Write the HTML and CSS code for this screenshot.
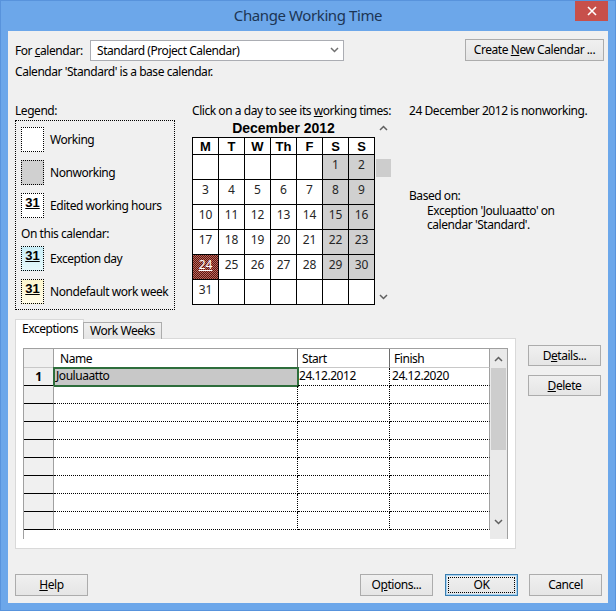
FILE: index.html
```html
<!DOCTYPE html>
<html>
<head>
<meta charset="utf-8">
<title>Change Working Time</title>
<link rel="stylesheet" href="styles.css">
</head>
<body>
<div class="window">
  <div class="titlebar">
    <div></div>
    <div class="title">Change Working Time</div>
    <div class="close"><svg width="10" height="10" viewBox="0 0 10 10"><path d="M1 1 L9 9 M9 1 L1 9" stroke="#fff" stroke-width="1.6" fill="none"/></svg></div>
  </div>
  <div class="client">
    <div class="top-row">
      <span class="lbl">For <u>c</u>alendar:</span>
      <div class="select"><span>Standard (Project Calendar)</span><svg class="chev" width="9" height="6" viewBox="0 0 9 6"><path d="M1 1 L4.5 4.5 L8 1" stroke="#707070" stroke-width="1.5" fill="none"/></svg></div>
      <div class="btn btn-create"><span>Create <u>N</u>ew Calendar ...</span></div>
    </div>
    <div class="base-note">Calendar 'Standard' is a base calendar.</div>

    <div class="middle">
      <div class="legend-col">
        <div class="cap">Legend:</div>
        <div class="legend-box">
          <div class="leg-item"><div class="sw"></div><span>Working</span></div>
          <div class="leg-item"><div class="sw sw-non"></div><span>Nonworking</span></div>
          <div class="leg-item"><div class="sw sw-num">31</div><span>Edited working hours</span></div>
          <div class="leg-sub">On this calendar:</div>
          <div class="leg-item"><div class="sw sw-num sw-exc">31</div><span>Exception day</span></div>
          <div class="leg-item"><div class="sw sw-num sw-nd">31</div><span>Nondefault work week</span></div>
        </div>
      </div>

      <div class="cal-col">
        <div class="cap">Click on a day to see its <u>w</u>orking times:</div>
        <div class="cal-wrap">
          <div class="cal">
            <div class="month">December 2012</div>
            <div class="grid">
              <div class="hd">M</div><div class="hd">T</div><div class="hd">W</div><div class="hd">Th</div><div class="hd">F</div><div class="hd">S</div><div class="hd">S</div>
              <div></div><div></div><div></div><div></div><div></div><div class="we">1</div><div class="we">2</div>
              <div>3</div><div>4</div><div>5</div><div>6</div><div>7</div><div class="we">8</div><div class="we">9</div>
              <div>10</div><div>11</div><div>12</div><div>13</div><div>14</div><div class="we">15</div><div class="we">16</div>
              <div>17</div><div>18</div><div>19</div><div>20</div><div>21</div><div class="we">22</div><div class="we">23</div>
              <div class="sel"><span>24</span></div><div>25</div><div>26</div><div>27</div><div>28</div><div class="we">29</div><div class="we">30</div>
              <div>31</div><div></div><div></div><div></div><div></div><div></div><div></div>
            </div>
          </div>
          <div class="cal-scroll">
            <div class="arr"><svg width="9" height="6" viewBox="0 0 9 6"><path d="M1 5 L4.5 1.5 L8 5" stroke="#606060" stroke-width="1.5" fill="none"/></svg></div>
            <div class="cthumb"></div>
            <div class="arr arr-down"><svg width="9" height="6" viewBox="0 0 9 6"><path d="M1 1 L4.5 4.5 L8 1" stroke="#606060" stroke-width="1.5" fill="none"/></svg></div>
          </div>
        </div>
      </div>

      <div class="info-col">
        <div class="cap">24 December 2012 is nonworking.</div>
        <div class="based">Based on:</div>
        <div class="based-text"><div>Exception 'Jouluaatto' on</div><div>calendar 'Standard'.</div></div>
      </div>
    </div>

    <div class="lower">
      <div class="tabs-col">
        <div class="tabs">
          <div class="tab tab-active">Exceptions</div>
          <div class="tab">Work Weeks</div>
        </div>
        <div class="panel">
          <div class="table">
            <div class="tgrid">
              <div class="row hrow">
                <div class="rh"></div>
                <div class="c c-name">Name</div>
                <div class="c c-start">Start</div>
                <div class="c c-fin">Finish</div>
              </div>
              <div class="row">
                <div class="rh rh-num">1</div>
                <div class="c c-name c-selname">Jouluaatto</div>
                <div class="c c-start">24.12.2012</div>
                <div class="c c-fin">24.12.2020</div>
              </div>
              <div class="row"><div class="rh"></div><div class="c c-name"></div><div class="c c-start"></div><div class="c c-fin"></div></div>
              <div class="row"><div class="rh"></div><div class="c c-name"></div><div class="c c-start"></div><div class="c c-fin"></div></div>
              <div class="row"><div class="rh"></div><div class="c c-name"></div><div class="c c-start"></div><div class="c c-fin"></div></div>
              <div class="row"><div class="rh"></div><div class="c c-name"></div><div class="c c-start"></div><div class="c c-fin"></div></div>
              <div class="row"><div class="rh"></div><div class="c c-name"></div><div class="c c-start"></div><div class="c c-fin"></div></div>
              <div class="row"><div class="rh"></div><div class="c c-name"></div><div class="c c-start"></div><div class="c c-fin"></div></div>
              <div class="row"><div class="rh"></div><div class="c c-name"></div><div class="c c-start"></div><div class="c c-fin"></div></div>
              <div class="row"><div class="rh"></div><div class="c c-name"></div><div class="c c-start"></div><div class="c c-fin"></div></div>
            </div>
            <div class="tscroll">
              <div class="tarr"><svg width="9" height="6" viewBox="0 0 9 6"><path d="M1 5 L4.5 1.5 L8 5" stroke="#606060" stroke-width="1.5" fill="none"/></svg></div>
              <div class="tthumb"></div>
              <div class="tarr tarr-down"><svg width="9" height="6" viewBox="0 0 9 6"><path d="M1 1 L4.5 4.5 L8 1" stroke="#606060" stroke-width="1.5" fill="none"/></svg></div>
            </div>
          </div>
        </div>
      </div>
      <div class="side-btns">
        <div class="btn btn-side"><span>D<u>e</u>tails...</span></div>
        <div class="btn btn-side"><span><u>D</u>elete</span></div>
      </div>
    </div>

    <div class="bottom">
      <div class="btn btn-b"><span><u>H</u>elp</span></div>
      <div class="spacer"></div>
      <div class="btn btn-b"><span>O<u>p</u>tions...</span></div>
      <div class="btn btn-b btn-ok"><span class="focus">OK</span></div>
      <div class="btn btn-b btn-cancel"><span>Cancel</span></div>
    </div>
  </div>
</div>
</body>
</html>
```
FILE: styles.css
```css
* { box-sizing: border-box; }
html, body { margin: 0; padding: 0; }
body {
  width: 616px;
  height: 611px;
  overflow: hidden;
  font-family: "Noto Sans", "Open Sans", sans-serif;
  font-size: 12px;
  letter-spacing: -0.45px;
  color: #000;
}
u { text-decoration: underline; text-underline-offset: 1px; }

.window {
  width: 616px;
  height: 611px;
  background: #6ca7ea;
  border: 1px solid #5893dc;
  padding: 0 7px 7px 7px;
  display: flex;
  flex-direction: column;
}

.titlebar {
  height: 30px;
  display: grid;
  grid-template-columns: 1fr auto 1fr;
}
.title {
  align-self: center;
  font-size: 15px;
  letter-spacing: -0.4px;
  color: #1c3554;
  margin-top: -2px;
}
.close {
  justify-self: end;
  align-self: start;
  width: 33px;
  height: 20px;
  background: #c7504b;
  display: flex;
  align-items: center;
  justify-content: center;
}

.client {
  flex: 1;
  background: #f0f0f0;
  padding: 8px 4px 7px 7px;
  display: flex;
  flex-direction: column;
}

.btn {
  display: flex;
  align-items: center;
  justify-content: center;
  background: linear-gradient(#f0f0f0, #e5e5e5);
  border: 1px solid #acacac;
  color: #000;
  line-height: 16px;
  white-space: nowrap;
}

.top-row {
  display: flex;
  align-items: center;
  height: 22px;
}
.lbl { width: 75px; flex: none; }
.select {
  flex: none;
  width: 254px;
  height: 21px;
  border: 1px solid #abadb3;
  background: #fff;
  padding: 0 4px 0 6px;
  display: flex;
  align-items: center;
  justify-content: space-between;
}
.btn-create {
  margin-left: auto;
  width: 139px;
  height: 22px;
}

.base-note {
  margin-top: 3px;
  line-height: 16px;
}

.middle {
  margin-top: 23px;
  display: flex;
  align-items: flex-start;
}
.cap { line-height: 16px; height: 16px; white-space: nowrap; }

.legend-col { width: 160px; flex: none; }
.legend-box {
  margin-top: 1px;
  height: 190px;
  border: 1px dotted #000;
  padding: 6px 5px 0 5px;
}
.leg-item {
  display: flex;
  align-items: center;
  height: 25px;
  margin-bottom: 8px;
  gap: 6px;
  white-space: nowrap;
}
.sw {
  width: 23px;
  height: 25px;
  border: 1px dotted #000;
  background: #fff;
  flex: none;
}
.sw-non { background: #d0d0d0; }
.sw-num {
  display: flex;
  justify-content: center;
  align-items: flex-start;
  padding-top: 2px;
  font-family: "Liberation Sans", Arial, sans-serif;
  font-weight: bold;
  font-size: 13px;
  letter-spacing: 0;
  line-height: 14px;
  text-decoration: underline;
}
.sw-exc { background: linear-gradient(#c9eef7, #e6f8fb); }
.sw-nd { background: linear-gradient(#fbf5cc, #fffbe8); }
.leg-sub {
  line-height: 16px;
  margin-top: 0;
  margin-bottom: 4px;
}

.cal-col { margin-left: 17px; flex: none; }
.cal-wrap { display: flex; }
.cal { width: 183px; }
.month {
  height: 18px;
  line-height: 18px;
  text-align: center;
  font-family: "Liberation Sans", Arial, sans-serif;
  font-weight: bold;
  font-size: 14px;
  letter-spacing: 0;
}
.grid {
  display: grid;
  grid-template-columns: repeat(7, 25px);
  grid-template-rows: 16px repeat(6, 24px);
  gap: 1px;
  background: #000;
  border: 1px solid #000;
}
.grid > div {
  background: #fff;
  display: flex;
  align-items: center;
  justify-content: center;
  font-size: 12px;
  letter-spacing: 0;
  color: #262626;
  padding-bottom: 6px;
}
.grid > .hd {
  font-family: "Liberation Sans", Arial, sans-serif;
  font-weight: bold;
  font-size: 13px;
  color: #000;
  padding-bottom: 0;
}
.grid > .we { background: #d0d0d0; }
.grid > .sel {
  background-color: #8c3a32;
  background-image: repeating-conic-gradient(#5e1610 0 25%, #b8685c 0 50%);
  background-size: 2px 2px;
  color: #fff;
}
.sel span { text-decoration: underline; }

.cal-scroll {
  width: 15px;
  margin-left: 1px;
  display: flex;
  flex-direction: column;
  align-items: center;
}
.arr {
  height: 18px;
  display: flex;
  align-items: center;
  justify-content: center;
}
.cthumb {
  margin-top: 22px;
  width: 15px;
  height: 18px;
  background: #cdcdcd;
}
.arr-down { margin-top: auto; height: 16px; }

.info-col { margin-left: 18px; flex: none; }
.based { margin-top: 69px; line-height: 16px; }
.based-text { padding-left: 18px; }
.based-text div { height: 14px; line-height: 14px; }

.lower {
  margin-top: 9px;
  display: flex;
  align-items: flex-start;
}
.tabs-col { width: 501px; flex: none; }
.tabs {
  display: flex;
  align-items: flex-end;
  height: 20px;
  margin-bottom: -1px;
  position: relative;
  z-index: 1;
}
.tab {
  height: 17px;
  border: 1px solid #acacac;
  border-bottom: none;
  background: linear-gradient(#f0f0f0, #e5e5e5);
  padding: 0 6px;
  line-height: 15px;
  margin-left: -1px;
}
.tab-active {
  height: 20px;
  width: 69px;
  margin-left: 0;
  background: #fff;
  border-color: #d9d9d9;
  line-height: 17px;
}
.panel {
  height: 211px;
  border: 1px solid #d9d9d9;
  background: #fff;
  padding: 9px 0 0 7px;
}

.table {
  width: 485px;
  height: 191px;
  border: 1px solid #a0a0a0;
  border-bottom: none;
  display: flex;
  overflow: hidden;
}
.tgrid { width: 466px; }
.row {
  display: flex;
  height: 18px;
}
.hrow { height: 19px; }
.rh {
  width: 30px;
  background: #f0f0f0;
  border-right: 1px solid #a0a0a0;
  border-bottom: 1px solid #000;
}
.hrow .rh { border-bottom: 1px solid #c8c8c8; }
.rh-num {
  display: flex;
  align-items: center;
  justify-content: center;
  font-weight: bold;
  line-height: 16px;
}
.c {
  border-right: 1px dotted #000;
  border-bottom: 1px dotted #000;
  line-height: 16px;
  white-space: nowrap;
}
.c-name { width: 244px; padding-left: 5px; }
.c-start { width: 92px; padding-left: 1px; }
.c-fin { width: 100px; padding-left: 2px; border-right: 1px solid #a0a0a0; }
.hrow .c {
  border-right: 1px solid #6d6d6d;
  border-bottom: 1px solid #c8c8c8;
  padding-top: 2px;
  padding-left: 6px;
}
.hrow .c-start, .hrow .c-fin { padding-left: 4px; }
.hrow .c-fin { border-right: 1px solid #a0a0a0; }
.c-selname {
  background: #c8c8c8;
  outline: 2px solid #2e6e3c;
  outline-offset: -1px;
  padding-left: 2px;
}

.tscroll {
  width: 17px;
  background: #eaeaea;
  display: flex;
  flex-direction: column;
  align-items: center;
}
.tarr {
  height: 19px;
  display: flex;
  align-items: center;
  justify-content: center;
}
.tthumb {
  width: 15px;
  height: 82px;
  background: #cdcdcd;
}
.tarr-down { margin-top: auto; height: 26px; padding-bottom: 9px; }

.side-btns {
  margin-left: 12px;
  margin-top: 26px;
  display: flex;
  flex-direction: column;
  gap: 9px;
}
.btn-side { width: 73px; height: 21px; }

.bottom {
  margin-top: auto;
  display: flex;
  align-items: center;
  padding-right: 2px;
}
.spacer { flex: 1; }
.btn-b { width: 73px; height: 22px; }
.btn-ok {
  margin-left: 12px;
  border-color: #3c7fb1;
  box-shadow: inset 0 0 0 1px #a8d4f3;
}
.focus {
  display: flex;
  align-items: center;
  justify-content: center;
  width: 67px;
  height: 16px;
  border: 1px dotted #000;
}
.btn-cancel { margin-left: 11px; }
```
